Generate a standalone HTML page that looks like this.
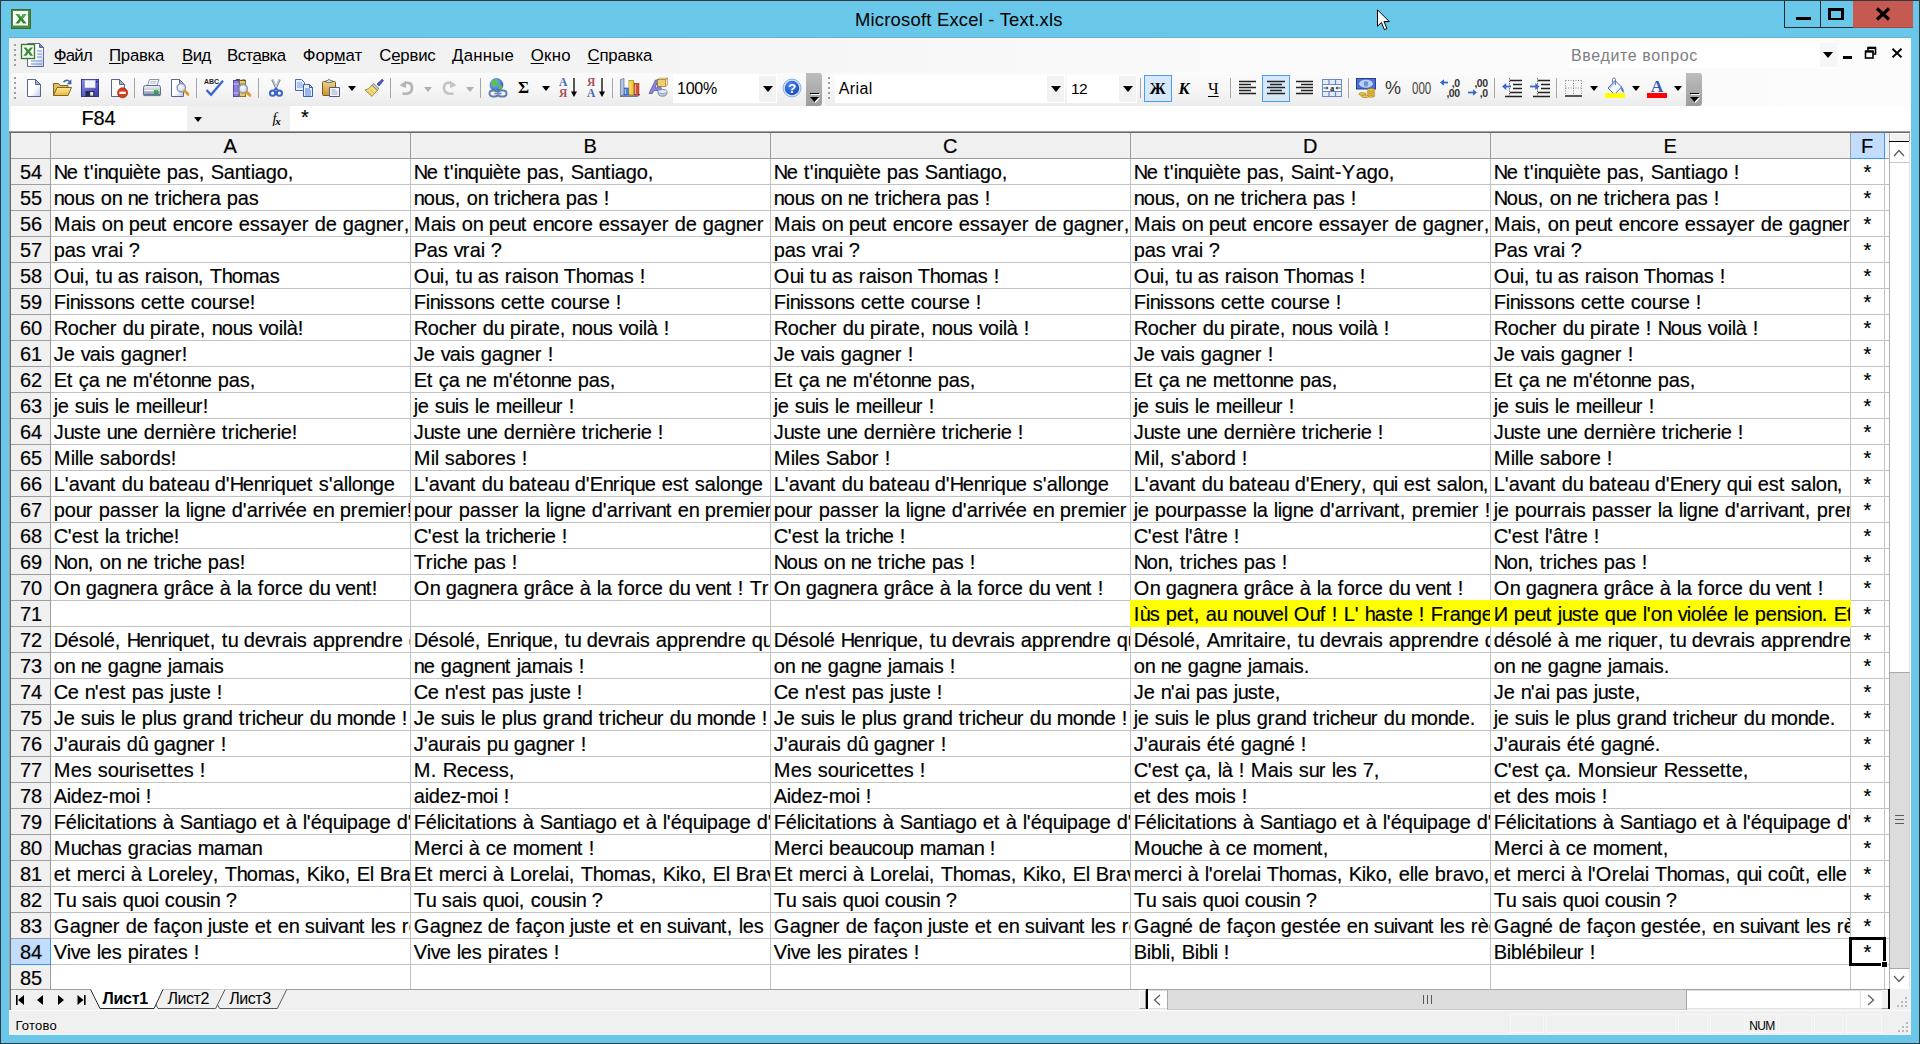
<!DOCTYPE html><html><head><meta charset="utf-8"><title>Microsoft Excel - Text.xls</title><style>
html,body{margin:0;padding:0}
body{width:1920px;height:1044px;overflow:hidden;background:#69c8ea;position:relative;font-family:"Liberation Sans","DejaVu Sans",sans-serif;color:#000}
div,span,svg,i,b{position:absolute;box-sizing:border-box;display:block}
.t{white-space:pre;font-style:normal;font-weight:normal}
#cl{left:9px;top:38px;width:1902px;height:997px;background:#f0f0f0}
#dock{left:9px;top:38px;width:1902px;height:68px;background:linear-gradient(90deg,#f0f0f0 0,#f1f1f1 20%,#f9f9f9 55%,#fcfcfc 100%)}
.band{top:73px;height:33px;background:linear-gradient(180deg,#fbfbfb 0,#f6f6f6 50%,#ebebeb 100%);border-radius:3px 0 0 3px}
.ov{top:73px;width:16px;height:33px;background:linear-gradient(180deg,#bdbdbd,#9c9c9c);border-radius:0 3px 3px 0}
.c{white-space:pre;overflow:hidden;font-size:20px;line-height:27px;height:25px;padding-left:2.7px}
.rh{left:11px;width:39px;height:25px;font-size:20px;line-height:27px;text-align:center;letter-spacing:-.15px;padding-left:1px}
.ch{top:133px;height:25px;font-size:20px;line-height:27px;text-align:center}
.hl{left:51px;width:1838px;height:1px;background:#c2c2c2}
.vl{top:159px;width:1px;height:830px;background:#c2c2c2}
.mi{height:26px;font-size:16.8px;line-height:26px;white-space:pre}
.mi u{text-decoration:underline;text-decoration-thickness:1px;text-underline-offset:1.500px}
.sep{top:78px;width:1px;height:20px;background:#a6a6a6}
.ic{top:78px;width:20px;height:20px;overflow:visible}
.dd{width:0;height:0;border-left:5.5px solid transparent;border-right:5.5px solid transparent;border-top:6px solid #000}
.dd.sm{border-left-width:4.500px;border-right-width:4.500px;border-top-width:5px}
.gd{width:2px;height:2px;background:#9e9e9e}
.ui{font-size:16px;line-height:26px;white-space:pre}
</style></head><body>

<svg width="0" height="0" style="position:absolute"><defs>
<linearGradient id="gp" x1="0" y1="0" x2="1" y2="1"><stop offset="0" stop-color="#fff"/><stop offset=".55" stop-color="#fff"/><stop offset="1" stop-color="#b9c6e6"/></linearGradient>
<linearGradient id="gf" x1="0" y1="0" x2="0" y2="1"><stop offset="0" stop-color="#fbe9a0"/><stop offset="1" stop-color="#eeb534"/></linearGradient>
<linearGradient id="gs" x1="0" y1="0" x2="1" y2="1"><stop offset="0" stop-color="#8a8ae8"/><stop offset="1" stop-color="#3c3ca8"/></linearGradient>
<linearGradient id="gpr" x1="0" y1="0" x2="0" y2="1"><stop offset="0" stop-color="#f4f6fa"/><stop offset="1" stop-color="#8a9ab8"/></linearGradient>
<radialGradient id="gl" cx=".4" cy=".35" r=".7"><stop offset="0" stop-color="#fff"/><stop offset="1" stop-color="#bcd0f0"/></radialGradient>
<radialGradient id="gh" cx=".4" cy=".3" r=".8"><stop offset="0" stop-color="#4a8af0"/><stop offset="1" stop-color="#1040b8"/></radialGradient>
<radialGradient id="gg" cx=".35" cy=".3" r=".8"><stop offset="0" stop-color="#8ac8ff"/><stop offset="1" stop-color="#2058c0"/></radialGradient>
<linearGradient id="gov" x1="0" y1="0" x2="0" y2="1"><stop offset="0" stop-color="#bcbcbc"/><stop offset="1" stop-color="#9c9c9c"/></linearGradient>
<linearGradient id="gcb" x1="0" y1="0" x2="0" y2="1"><stop offset="0" stop-color="#f0d488"/><stop offset="1" stop-color="#c89030"/></linearGradient>
</defs></svg>

<div style="left:0;top:0;width:1920px;height:1044px;border:1px solid #35383c"></div>
<div style="left:9px;top:37px;width:1902px;height:1px;background:#5fb4d3"></div>
<div id="cl"></div>
<div id="dock"></div>
<svg style="left:11px;top:9px" width="20" height="20" viewBox="0 0 20 20"><rect x=".5" y=".5" width="19" height="19" fill="#4c8a3c" stroke="#3a6e2e"/><rect x="2" y="2" width="15" height="14.500" fill="#fafcf8"/><path d="M4.500 5l3.500 0l2 3l2-3l3.500 0l-3.700 4.700l3.800 4.800l-3.600 0l-2-3.100l-2 3.100l-3.600 0l3.800-4.800z" fill="#2e8a2e"/><path d="M4.500 5l3.500 0l2 3l2-3l3.500 0l-3.700 4.700z" fill="#56a856"/></svg>
<div class="t" id="title" style="left:855.00px;top:7px;letter-spacing:0.220px;font-size:18.400px;line-height:26px">Microsoft Excel - Text.xls</div>
<div style="left:1784px;top:1px;width:37px;height:27px;border:1px solid #2b2b2b;border-top:0"></div>
<div style="left:1820px;top:1px;width:34px;height:27px;border:1px solid #2b2b2b;border-top:0"></div>
<div style="left:1853px;top:1px;width:60px;height:27px;background:#c65a50;border-bottom:1px solid #9c4a42"></div>
<div style="left:1796px;top:17px;width:15px;height:3px;background:#000"></div>
<div style="left:1828px;top:8px;width:16px;height:12px;border:3px solid #000;border-bottom-width:2.500px"></div>
<svg style="left:1875px;top:7px" width="16" height="14" viewBox="0 0 16 14"><path d="M2 1.500l12 11M14 1.500l-12 11" stroke="#000" stroke-width="3.200"/></svg>
<div class="gd" style="left:14px;top:44px"></div>
<div class="gd" style="left:14px;top:49px"></div>
<div class="gd" style="left:14px;top:54px"></div>
<div class="gd" style="left:14px;top:59px"></div>
<div class="gd" style="left:14px;top:64px"></div>
<svg style="left:20px;top:42px" width="26" height="26" viewBox="0 0 26 26"><path d="M7.500 1.500h12l4 4v19h-16z" fill="url(#gp)" stroke="#5a6c94"/><path d="M19.500 1.500v4h4z" fill="#7088c0" stroke="#5a6c94" stroke-linejoin="round"/><path d="M17 9h5M17 12h5M17 15h5M11 19h11M11 22h11" stroke="#6a8ad8" stroke-width="1"/><rect x="1.500" y="2.500" width="13" height="14" fill="#fbfdf9" stroke="#3d7a30" stroke-width="1.400"/><path d="M3.500 5.500h3l1.800 2.600l1.800-2.600h3l-3.200 4l3.300 4.200h-3.100l-1.800-2.700l-1.800 2.700h-3.100l3.300-4.200z" fill="#3a8a3a"/></svg>
<div class="mi" id="m1" style="left:53.70px;top:43px;letter-spacing:-0.733px"><u>Ф</u>айл</div>
<div class="mi" id="m2" style="left:109.00px;top:43px;letter-spacing:-0.260px"><u>П</u>равка</div>
<div class="mi" id="m3" style="left:182.00px;top:43px;letter-spacing:-0.500px"><u>В</u>ид</div>
<div class="mi" id="m4" style="left:227.00px;top:43px;letter-spacing:-0.550px">Вст<u>а</u>вка</div>
<div class="mi" id="m5" style="left:302.70px;top:43px;letter-spacing:-0.040px">Фор<u>м</u>ат</div>
<div class="mi" id="m6" style="left:379.30px;top:43px;letter-spacing:-0.220px">С<u>е</u>рвис</div>
<div class="mi" id="m7" style="left:452.00px;top:43px;letter-spacing:0.260px"><u>Д</u>анные</div>
<div class="mi" id="m8" style="left:530.70px;top:43px;letter-spacing:0.333px"><u>О</u>кно</div>
<div class="mi" id="m9" style="left:587.50px;top:43px;letter-spacing:-0.167px"><u>С</u>правка</div>
<div style="left:1569px;top:42px;width:268px;height:26px;background:#fff"></div>
<div style="left:1820px;top:43px;width:17px;height:24px;background:#f6f6f6"></div>
<div class="ui" id="q" style="left:1571.00px;top:42.5px;letter-spacing:0.631px;color:#7e7e7e">Введите вопрос</div>
<div class="dd" style="left:1823px;top:52px"></div>
<div style="left:1843px;top:56px;width:9px;height:3px;background:#000"></div>
<svg style="left:1864px;top:46px" width="13" height="14" viewBox="0 0 13 14"><path d="M4 4.500v-2.500h7.500v6h-2.500" fill="none" stroke="#000" stroke-width="1.600"/><path d="M3.500 1.800h8.500" stroke="#000" stroke-width="2.200"/><rect x="1.500" y="5.500" width="7.500" height="6.500" fill="none" stroke="#000" stroke-width="1.600"/><path d="M1 5.400h8.500" stroke="#000" stroke-width="2.200"/></svg>
<svg style="left:1891px;top:47px" width="12" height="12" viewBox="0 0 12 12"><path d="M1.500 1.800l9 8.600M10.500 1.800l-9 8.600" stroke="#000" stroke-width="2"/></svg>
<div class="band" style="left:11px;width:796px"></div>
<div class="ov" style="left:806px"></div>
<div class="band" style="left:825px;width:862px"></div>
<div class="ov" style="left:1686px"></div>
<div style="left:806px;top:93px;width:9px;height:1px;background:#000;margin-left:4px"></div>
<div style="left:806px;top:94px;width:9px;height:1px;background:#fff;margin-left:5px"></div>
<svg style="left:809px;top:96px" width="12" height="8" viewBox="0 0 12 8"><path d="M2 2h9l-4.500 5z" fill="#fff"/><path d="M1 1h9l-4.500 5z" fill="#000"/></svg>
<div style="left:1686px;top:93px;width:9px;height:1px;background:#000;margin-left:4px"></div>
<div style="left:1686px;top:94px;width:9px;height:1px;background:#fff;margin-left:5px"></div>
<svg style="left:1689px;top:96px" width="12" height="8" viewBox="0 0 12 8"><path d="M2 2h9l-4.500 5z" fill="#fff"/><path d="M1 1h9l-4.500 5z" fill="#000"/></svg>
<div class="gd" style="left:14px;top:77px"></div>
<div class="gd" style="left:14px;top:82px"></div>
<div class="gd" style="left:14px;top:87px"></div>
<div class="gd" style="left:14px;top:92px"></div>
<div class="gd" style="left:14px;top:97px"></div>
<div class="gd" style="left:828px;top:77px"></div>
<div class="gd" style="left:828px;top:82px"></div>
<div class="gd" style="left:828px;top:87px"></div>
<div class="gd" style="left:828px;top:92px"></div>
<div class="gd" style="left:828px;top:97px"></div>
<svg class="ic" style="left:24px;top:78px" width="20" height="20" viewBox="0 0 20 20"><path d="M3.5 1.5h8l5 5v12h-13z" fill="url(#gp)" stroke="#55678c"/><path d="M11.5 1.5v5h5z" fill="#9fb0d6" stroke="#55678c" stroke-linejoin="round"/></svg>
<svg class="ic" style="left:52px;top:78px" width="20" height="20" viewBox="0 0 20 20"><path d="M1.5 5.5h5l1.5 2h8v10h-14.5z" fill="#e4be5c" stroke="#7d6428"/><path d="M1.5 17.5l3.5-8h14.5l-3.5 8z" fill="url(#gf)" stroke="#7d6428" stroke-linejoin="round"/><path d="M11.5 4.2q3.5-3.6 6.3-.4" fill="none" stroke="#3d62a8" stroke-width="1.5"/><path d="M19.4 1.2v5h-4.6z" fill="#3d62a8"/></svg>
<svg class="ic" style="left:80px;top:78px" width="20" height="20" viewBox="0 0 20 20"><rect x="1.5" y="1.5" width="17" height="17" fill="url(#gs)" stroke="#34349a"/><rect x="4.5" y="2" width="11" height="8" fill="#f4f6ff" stroke="#7a7ad0" stroke-width=".6"/><rect x="5.5" y="13" width="9" height="5.5" fill="#2a2a48"/><rect x="10.2" y="14" width="3" height="3.6" fill="#e8ecf8"/><rect x="16" y="3" width="1.4" height="1.4" fill="#22226a"/></svg>
<svg class="ic" style="left:108px;top:78px" width="20" height="20" viewBox="0 0 20 20"><path d="M3.5 1.5h8l5 5v12h-13z" fill="url(#gp)" stroke="#55678c"/><path d="M11.5 1.5v5h5z" fill="#9fb0d6" stroke="#55678c" stroke-linejoin="round"/><circle cx="14.6" cy="14.8" r="5" fill="#d8401c" stroke="#a02a10" stroke-width=".8"/><rect x="11.4" y="13.7" width="6.4" height="2.3" fill="#fff"/></svg>
<svg class="ic" style="left:142px;top:78px" width="20" height="20" viewBox="0 0 20 20"><path d="M5.5 7.5l2-6h9.5l-2 6z" fill="#f8f9fc" stroke="#8a96ac"/><path d="M8.5 3.6h6M8 5.3h6" stroke="#a8b2c8" stroke-width=".8"/><path d="M1.5 9.5q0-2 2-2h13q2 0 2 2v7h-17z" fill="url(#gpr)" stroke="#5c6c8c"/><path d="M2.5 12.5h15" stroke="#fff" stroke-width="1"/><path d="M1.5 16.5h17v1.6h-17z" fill="#6c7c9c"/><rect x="12.6" y="12.6" width="3.4" height="3" fill="#20c030" stroke="#108018" stroke-width=".5"/></svg>
<svg class="ic" style="left:170px;top:78px" width="20" height="20" viewBox="0 0 20 20"><path d="M1.5 1.5h8l4 4v13h-12z" fill="url(#gp)" stroke="#55678c"/><path d="M9.5 1.5v4h4z" fill="#9fb0d6" stroke="#55678c" stroke-linejoin="round"/><circle cx="11.3" cy="9.8" r="4.2" fill="url(#gl)" stroke="#8c98b0" stroke-width="1.4"/><path d="M14.5 13.0l3.6 3.6" stroke="#e89a28" stroke-width="2.6" stroke-linecap="round"/><path d="M14.5 13.0l3.6 3.6" stroke="#7a5a20" stroke-width=".5" fill="none" transform="translate(.9,-.9)"/></svg>
<svg class="ic" style="left:204px;top:78px" width="20" height="20" viewBox="0 0 20 20"><text x="0" y="5.8" font-family="Liberation Sans,sans-serif" font-size="7.6" font-weight="bold" fill="#222" textLength="15" lengthAdjust="spacingAndGlyphs">ABC</text><path d="M2.5 12l4.5 4.800l12-14" fill="none" stroke="#3a66d0" stroke-width="2.300" stroke-linejoin="miter"/></svg>
<svg class="ic" style="left:232px;top:78px" width="20" height="20" viewBox="0 0 20 20"><rect x="1.5" y="2.5" width="5.5" height="16" fill="#8a80e0" stroke="#5048a8"/><path d="M1.5 6h5.5M1.5 15h5.5" stroke="#c8c0ff" stroke-width="1"/><rect x="7.5" y="2.5" width="6" height="16" fill="#e8c860" stroke="#8a7028"/><path d="M7.5 6h6" stroke="#8a7028" stroke-width=".8"/><path d="M3 2.5l1.5-1.5h3l1.5 1.5M9 2.5l1-1h3l1 1" fill="#444" stroke="none"/><circle cx="11.2" cy="10.8" r="4.2" fill="url(#gl)" stroke="#8c98b0" stroke-width="1.4"/><path d="M14.399999999999999 14.0l3.6 3.6" stroke="#e89a28" stroke-width="2.6" stroke-linecap="round"/><path d="M14.399999999999999 14.0l3.6 3.6" stroke="#7a5a20" stroke-width=".5" fill="none" transform="translate(.9,-.9)"/></svg>
<svg class="ic" style="left:266px;top:78px" width="20" height="20" viewBox="0 0 20 20"><path d="M6.2 1.5l4.6 10M13.8 1.5l-4.6 10" stroke="#8a94a8" stroke-width="2.2" fill="none"/><path d="M6.8 1.5l3.6 8M13.2 1.5l-3.6 8" stroke="#e4e8f0" stroke-width=".7" fill="none"/><circle cx="6.6" cy="15.2" r="2.6" fill="none" stroke="#3a62c8" stroke-width="2"/><circle cx="13.4" cy="15.2" r="2.6" fill="none" stroke="#3a62c8" stroke-width="2"/><path d="M8 12.8l2-2.4l2 2.4" stroke="#3a62c8" stroke-width="1.8" fill="none"/></svg>
<svg class="ic" style="left:294px;top:78px" width="20" height="20" viewBox="0 0 20 20"><path d="M1.5 1.5h6l3 3v8h-9z" fill="#e8f0ff" stroke="#4a68b0"/><path d="M3 5h5M3 7h6M3 9h6" stroke="#6a90e0" stroke-width=".9"/><path d="M9.5 6.5h6l3 3v9h-9z" fill="#e8f0ff" stroke="#4060a8"/><path d="M15.5 6.5v3h3z" fill="#a8c0f0" stroke="#4060a8" stroke-linejoin="round"/><path d="M11 11h5M11 13h6M11 15h6M11 17h6" stroke="#4a78e0" stroke-width="1"/></svg>
<svg class="ic" style="left:321px;top:78px" width="20" height="20" viewBox="0 0 20 20"><rect x="1.5" y="3.5" width="13" height="14" rx="1" fill="url(#gcb)" stroke="#7a5a1c"/><path d="M5 4.5v-2h2l.6-1.3h1l.6 1.300h2v2z" fill="#d8dce8" stroke="#5a5a6a" stroke-width=".7"/><path d="M8.500 9.500h10v9h-10z" fill="#f4f6fc" stroke="#4a5a80"/><path d="M10.500 12h4M10.500 14h6M10.500 16h6" stroke="#8a9ac0" stroke-width=".9"/></svg>
<svg class="ic" style="left:364px;top:78px" width="20" height="20" viewBox="0 0 20 20"><path d="M13 6l5.200-4.800l1.300 1.300l-4.500 5.500z" fill="#5a5ad0" stroke="#2a2a88" stroke-width=".7"/><path d="M9.500 5.500l5.500 5l-1.800 1.800l-5.700-4.800z" fill="#c8c8d0" stroke="#66666e" stroke-width=".7"/><path d="M7.800 7.200l5.600 5.200l-5.400 6l-7-6.400q4.500-.6 6.800-4.800z" fill="#f4dc80" stroke="#8a7428" stroke-width=".8"/><path d="M4 13.500l4 3.800M6 11.500l4 3.800" stroke="#c8a840" stroke-width=".7"/></svg>
<svg class="ic" style="left:397px;top:78px" width="20" height="20" viewBox="0 0 20 20"><path d="M5.500 15.500q10 1.500 9.500-6.500q-.8-5.500-7-4" fill="none" stroke="#b4b4b4" stroke-width="2.600"/><path d="M2.500 7.500l6.500-5v7.500z" fill="#b4b4b4"/></svg>
<svg class="ic" style="left:439px;top:78px" width="20" height="20" viewBox="0 0 20 20"><path d="M14.500 15.500q-10 1.500-9.500-6.500q.8-5.500 7-4" fill="none" stroke="#c4c4c4" stroke-width="2.600"/><path d="M17.500 7.500l-6.500-5v7.500z" fill="#c4c4c4"/></svg>
<svg class="ic" style="left:488px;top:78px" width="20" height="20" viewBox="0 0 20 20"><circle cx="8.500" cy="7" r="6.500" fill="url(#gg)" stroke="#3a5a98" stroke-width=".6"/><path d="M4.500 2.500q3-1.500 4.500.5q2 1.500 0 3.500q-.5 2.500-3 2q-3-.5-2.500-3.500zM10.500 7q2.500-.8 3.500 1q.5 2-1.500 3.500q-2 .5-2.500-2z" fill="#5cc04c"/><rect x="1.500" y="12.500" width="8.500" height="6" rx="3" fill="none" stroke="#5f7cac" stroke-width="1.900"/><rect x="10" y="12.500" width="8.500" height="6" rx="3" fill="none" stroke="#5f7cac" stroke-width="1.900"/><path d="M6.500 15.500h7" stroke="#9fb4d8" stroke-width="2.200"/><path d="M6.500 15.500h7" stroke="#4a6494" stroke-width=".6"/></svg>
<svg class="ic" style="left:620px;top:78px" width="20" height="20" viewBox="0 0 20 20"><path d="M.500 1.500l3.500-1v16l-3.500 2z" fill="#b4c4e0" stroke="#5a6e98" stroke-width=".7"/><path d="M.500 18.500l3.500-2h16l-2.500 2z" fill="#8c9cc0" stroke="#4a5a88" stroke-width=".7"/><rect x="4.300" y="10" width="4" height="7" fill="#4a80e8" stroke="#2a4aa0" stroke-width=".6"/><rect x="9" y="2.500" width="4.600" height="14.500" fill="#f4cc28" stroke="#907010" stroke-width=".6"/><rect x="14.300" y="5.500" width="4.600" height="11.500" fill="#e44c30" stroke="#902010" stroke-width=".6"/><path d="M10 3.500v12.500M15.300 6.500v9.500M5.300 11v5" stroke="#fff" stroke-opacity=".55" stroke-width="1.200"/></svg>
<svg class="ic" style="left:648px;top:78px" width="20" height="20" viewBox="0 0 20 20"><path d="M1 15.500l6.500-13.500h3.500l3.500 13.500h-3.600l-.7-3h-4.400l-1.300 3zM7 9.800h2.800l-.9-4.600z" fill="#8a86dc" stroke="#4a48a0" stroke-width=".7" fill-rule="evenodd"/><rect x="9.500" y="1.500" width="8" height="7" fill="#f0d070" stroke="#907020" stroke-width=".7"/><path d="M9.500 1.500l2-1.300h8l-2 1.300zM17.500 1.500l2-1.300v7l-2 1.300z" fill="#f8e8a8" stroke="#907020" stroke-width=".5"/><ellipse cx="14.500" cy="14.800" rx="4.500" ry="3.400" fill="#c4cce0" stroke="#6a7898" stroke-width=".8"/><ellipse cx="14.500" cy="13.600" rx="4.500" ry="2" fill="#e8ecf6" stroke="#6a7898" stroke-width=".6"/></svg>
<svg class="ic" style="left:782px;top:78px" width="20" height="20" viewBox="0 0 20 20"><circle cx="10" cy="10" r="9" fill="#cfe0f6" stroke="#8cb0dc" stroke-width="1"/><circle cx="10" cy="10" r="7.200" fill="url(#gh)"/><text x="10" y="15" text-anchor="middle" font-family="Liberation Sans,sans-serif" font-weight="bold" font-size="13.500" fill="#fff">?</text></svg>
<div class="sep" style="left:134px"></div>
<div class="sep" style="left:196px"></div>
<div class="sep" style="left:258px"></div>
<div class="sep" style="left:390px"></div>
<div class="sep" style="left:480px"></div>
<div class="sep" style="left:612px"></div>
<div class="dd sm" style="left:348px;top:86px"></div>
<div class="dd sm" style="left:424px;top:87px;border-top-color:#b0b0b0"></div>
<div class="dd sm" style="left:466px;top:87px;border-top-color:#b0b0b0"></div>
<div class="dd sm" style="left:542px;top:86px"></div>
<div class="t" id="sigma" style="left:518.00px;top:74px;font-family:'Liberation Serif',serif;font-weight:bold;font-size:17px;line-height:28px">Σ</div>
<div class="t" style="left:559px;top:76px;font-family:'Liberation Serif',serif;font-weight:bold;font-size:11.500px;line-height:12px;color:#4866b0">А</div>
<div class="t" style="left:559px;top:87px;font-family:'Liberation Serif',serif;font-weight:bold;font-size:11.500px;line-height:12px;color:#a85454">Я</div>
<div class="t" style="left:587px;top:76px;font-family:'Liberation Serif',serif;font-weight:bold;font-size:11.500px;line-height:12px;color:#a85454">Я</div>
<div class="t" style="left:587px;top:87px;font-family:'Liberation Serif',serif;font-weight:bold;font-size:11.500px;line-height:12px;color:#4866b0">А</div>
<svg style="left:569.5px;top:78px" width="8" height="20" viewBox="0 0 8 20"><path d="M4 0v16" stroke="#000" stroke-width="1.300"/><path d="M1 13.500l3 5.500l3-5.500z" fill="#000"/></svg>
<svg style="left:597.5px;top:78px" width="8" height="20" viewBox="0 0 8 20"><path d="M4 0v16" stroke="#000" stroke-width="1.300"/><path d="M1 13.500l3 5.500l3-5.500z" fill="#000"/></svg>
<div style="left:673px;top:75px;width:104px;height:28px;background:#fff"></div>
<div style="left:759px;top:76px;width:17px;height:26px;background:#f2f2f2"></div>
<div class="ui" id="zoom" style="left:677.00px;top:75px;letter-spacing:-0.267px;line-height:27px">100%</div>
<div class="dd" style="left:763px;top:86px"></div>
<div style="left:835px;top:75px;width:230px;height:28px;background:#fff"></div>
<div style="left:1047px;top:76px;width:17px;height:26px;background:#f2f2f2"></div>
<div class="ui" id="fname" style="left:838.80px;top:75px;letter-spacing:0.350px;line-height:27px">Arial</div>
<div class="dd" style="left:1051px;top:86px"></div>
<div style="left:1067px;top:75px;width:70px;height:28px;background:#fff"></div>
<div style="left:1119px;top:76px;width:17px;height:26px;background:#f2f2f2"></div>
<div class="ui" id="fsize" style="left:1071.10px;top:75px;letter-spacing:-0.600px;line-height:27px;font-size:15.500px">12</div>
<div class="dd" style="left:1123px;top:86px"></div>
<div class="sep" style="left:1140px"></div>
<div class="sep" style="left:1230px"></div>
<div class="sep" style="left:1348px"></div>
<div class="sep" style="left:1494px"></div>
<div class="sep" style="left:1556px"></div>
<div style="left:1144px;top:75px;width:28px;height:27px;background:#d6e8fa;border:1px solid #4a9cf0"></div>
<div style="left:1262px;top:75px;width:28px;height:27px;background:#d6e8fa;border:1px solid #4a9cf0"></div>
<div class="t" id="bB" style="left:1149.50px;top:75px;font-family:'Liberation Serif',serif;font-weight:bold;font-size:16.500px;line-height:27px">Ж</div>
<div class="t" id="bI" style="left:1178.50px;top:75px;font-family:'Liberation Serif',serif;font-weight:bold;font-size:16.500px;line-height:27px;font-style:italic">К</div>
<div class="t" id="bU" style="left:1208.00px;top:75px;font-family:'Liberation Serif',serif;font-weight:bold;font-size:16.500px;line-height:27px;font-weight:normal;text-decoration:underline;text-underline-offset:2px">Ч</div>
<svg class="ic" style="left:1238px;top:78px" width="20" height="20" viewBox="0 0 20 20"><path d="M1 3.500h17M1 6.500h12M1 9.500h17M1 12.500h12M1 15.500h17" stroke="#222" stroke-width="1.400"/></svg>
<svg class="ic" style="left:1266px;top:78px" width="20" height="20" viewBox="0 0 20 20"><path d="M1 3.500h18M4 6.500h12M1 9.500h18M4 12.500h12M1 15.500h18" stroke="#222" stroke-width="1.400"/></svg>
<svg class="ic" style="left:1294px;top:78px" width="20" height="20" viewBox="0 0 20 20"><path d="M2 3.500h17M7 6.500h12M2 9.500h17M7 12.500h12M2 15.500h17" stroke="#222" stroke-width="1.400"/></svg>
<svg class="ic" style="left:1322px;top:78px" width="20" height="20" viewBox="0 0 20 20"><rect x=".5" y="1.500" width="19" height="17" fill="#e4ecfa" stroke="#6a88c8"/><path d="M.5 6.500h19M.5 13.500h19M7 1.500v5M13.500 1.500v5M7 13.500v5M13.500 13.500v5" stroke="#6a88c8" stroke-width="1.200"/><rect x="1" y="7" width="18" height="6" fill="#f6f8fe"/><text x="10" y="12.600" text-anchor="middle" font-family="Liberation Serif,serif" font-weight="bold" font-size="8.500" fill="#222">a</text><path d="M1.500 10h4.500M18.500 10h-4.500" stroke="#444" stroke-width="1.200"/><path d="M6.500 10l-2-1.800v3.600zM13.500 10l2-1.800v3.600z" fill="#444"/></svg>
<svg class="ic" style="left:1356px;top:78px" width="20" height="20" viewBox="0 0 20 20"><rect x=".5" y=".5" width="19" height="10.500" fill="#4a70d8" stroke="#2a3e90"/><ellipse cx="10" cy="5.700" rx="6.500" ry="3.600" fill="#b8d0f8" stroke="#e8f0ff" stroke-width=".6"/><ellipse cx="10" cy="5.700" rx="2.200" ry="2.800" fill="#6a90e0"/><g fill="#f0c040" stroke="#8a6a18" stroke-width=".5"><ellipse cx="15" cy="17.800" rx="3.800" ry="1.500"/><ellipse cx="15" cy="15.800" rx="3.800" ry="1.500"/><ellipse cx="15" cy="13.800" rx="3.800" ry="1.500"/><ellipse cx="15" cy="11.800" rx="3.800" ry="1.500"/><ellipse cx="6.500" cy="16" rx="3.600" ry="1.500"/><ellipse cx="9" cy="18.300" rx="3.600" ry="1.400"/></g></svg>
<svg class="ic" style="left:1440px;top:78px" width="20" height="20" viewBox="0 0 20 20"><text x="19.500" y="8.600" text-anchor="end" font-family="Liberation Sans,sans-serif" font-size="10.500" font-weight="bold" fill="#333" letter-spacing="-.5">,0</text><text x="19.500" y="18.600" text-anchor="end" font-family="Liberation Sans,sans-serif" font-size="10.500" font-weight="bold" fill="#333" letter-spacing="-.5">,00</text><path d="M1 4.500h7" stroke="#3a66d0" stroke-width="1.800"/><path d="M0 4.500l4-3.300v6.600z" fill="#3a66d0"/></svg>
<svg class="ic" style="left:1468px;top:78px" width="20" height="20" viewBox="0 0 20 20"><text x="19.500" y="8.600" text-anchor="end" font-family="Liberation Sans,sans-serif" font-size="10.500" font-weight="bold" fill="#333" letter-spacing="-.5">,00</text><text x="19.500" y="18.600" text-anchor="end" font-family="Liberation Sans,sans-serif" font-size="10.500" font-weight="bold" fill="#333" letter-spacing="-.5">,0</text><path d="M0 14.500h7" stroke="#3a66d0" stroke-width="1.800"/><path d="M9 14.500l-4-3.300v6.600z" fill="#3a66d0"/></svg>
<svg class="ic" style="left:1502px;top:78px" width="20" height="20" viewBox="0 0 20 20"><path d="M8 2.500h12M11 6.500h9M11 10.500h9M8 14.500h12M3 18.500h17" stroke="#222" stroke-width="1.600"/><path d="M7.500 0v20" stroke="#444" stroke-width=".8" stroke-dasharray="1.500 1"/><path d="M2 8.500h7" stroke="#3a66d0" stroke-width="1.800"/><path d="M0 8.500l4.200-3.400v6.800z" fill="#3a66d0"/></svg>
<svg class="ic" style="left:1530px;top:78px" width="20" height="20" viewBox="0 0 20 20"><path d="M8 2.500h12M11 6.500h9M11 10.500h9M8 14.500h12M3 18.500h17" stroke="#222" stroke-width="1.600"/><path d="M7.500 0v20" stroke="#444" stroke-width=".8" stroke-dasharray="1.500 1"/><path d="M0 8.500h6" stroke="#3a66d0" stroke-width="1.800"/><path d="M9.500 8.500l-4.200-3.400v6.800z" fill="#3a66d0"/></svg>
<svg class="ic" style="left:1564px;top:78px" width="20" height="20" viewBox="0 0 20 20"><path d="M1.500 2.500h16M1.500 2.500v15M17.500 2.500v15M9.500 2.500v15M1.500 10h16" stroke="#8a8a8a" stroke-width="1" stroke-dasharray="1 1.500" fill="none"/><path d="M1 18h17" stroke="#444" stroke-width="1.800"/></svg>
<svg class="ic" style="left:1605px;top:78px" width="20" height="20" viewBox="0 0 20 20"><path d="M3 10l7-7.500l6.500 6.500l-7 7.500z" fill="#f4f8ff" stroke="#4a6ab0" stroke-width="1"/><path d="M7.500 5v-3.500q0-1.500 1.500-1.500t1.500 1.500v5.500" fill="none" stroke="#6a7aa0" stroke-width="1"/><path d="M16 8.500q3.500 2.500 2.500 6.500q-2.500-2-2.500-6.500z" fill="#3a6ad8"/><path d="M4.500 10l5.500-5.800" stroke="#a8c0f0" stroke-width="1.500"/></svg>
<svg class="ic" style="left:1647px;top:78px" width="20" height="20" viewBox="0 0 20 20"><text x="10" y="13.800" text-anchor="middle" font-family="Liberation Serif,serif" font-weight="bold" font-size="17.500" fill="#3a5cb0">A</text></svg>
<div class="ui" id="pct" style="left:1385.00px;top:75px;font-size:18px;line-height:27px;color:#333">%</div>
<div class="ui" id="thou" style="left:1412.00px;top:75px;font-size:17px;line-height:27px;color:#444;transform:scaleX(.68);transform-origin:0 0">000</div>
<div class="dd sm" style="left:1590px;top:86px"></div>
<div class="dd sm" style="left:1632px;top:86px"></div>
<div class="dd sm" style="left:1674px;top:86px"></div>
<div style="left:1605px;top:93px;width:20px;height:5px;background:#ffff00"></div>
<div style="left:1647px;top:93px;width:20px;height:5px;background:#ff0000"></div>
<div style="left:11px;top:106px;width:176px;height:25px;background:#fff"></div>
<div class="dd sm" style="left:194px;top:117px"></div>
<div class="t" style="left:272.500px;top:108px;font-family:'Liberation Serif',serif;font-style:italic;font-size:14.500px;line-height:20px;letter-spacing:-1.200px">f<span style="position:static;display:inline;font-size:11px;font-weight:bold;vertical-align:-1.500px">x</span></div>
<div style="left:290px;top:106px;width:1621px;height:25px;background:#fff"></div>
<div style="left:9px;top:131px;width:1901px;height:1px;background:#a0a0a0"></div>
<div style="left:9px;top:132px;width:1901px;height:1px;background:#696969"></div>
<div style="left:10px;top:133px;width:1px;height:877px;background:#696969"></div>
<div style="left:9px;top:133px;width:1px;height:877px;background:#a0a0a0"></div>
<div style="left:11px;top:133px;width:1900px;height:856px;background:#fff"></div>
<div style="left:11px;top:133px;width:1879px;height:25px;background:#f0f0f0"></div>
<div style="left:11px;top:158px;width:1879px;height:1px;background:#9c9c9c"></div>
<div style="left:50px;top:133px;width:1px;height:856px;background:#9c9c9c"></div>
<div style="left:11px;top:159px;width:39px;height:830px;background:#f0f0f0"></div>
<div style="left:410px;top:133px;width:1px;height:25px;background:#9c9c9c"></div>
<div style="left:770px;top:133px;width:1px;height:25px;background:#9c9c9c"></div>
<div style="left:1130px;top:133px;width:1px;height:25px;background:#9c9c9c"></div>
<div style="left:1490px;top:133px;width:1px;height:25px;background:#9c9c9c"></div>
<div style="left:1850px;top:133px;width:1px;height:25px;background:#9c9c9c"></div>
<div style="left:1851px;top:133px;width:34px;height:26px;background:#c2dcfb;border-right:1px solid #3b97f5;border-bottom:1px solid #3b97f5"></div>
<div class="vl" style="left:410px"></div>
<div class="vl" style="left:770px"></div>
<div class="vl" style="left:1130px"></div>
<div class="vl" style="left:1490px"></div>
<div class="vl" style="left:1850px"></div>
<div class="vl" style="left:1884px"></div>
<div class="hl" style="top:184px"></div>
<div style="left:11px;top:184px;width:39px;height:1px;background:#9c9c9c"></div>
<div class="hl" style="top:210px"></div>
<div style="left:11px;top:210px;width:39px;height:1px;background:#9c9c9c"></div>
<div class="hl" style="top:236px"></div>
<div style="left:11px;top:236px;width:39px;height:1px;background:#9c9c9c"></div>
<div class="hl" style="top:262px"></div>
<div style="left:11px;top:262px;width:39px;height:1px;background:#9c9c9c"></div>
<div class="hl" style="top:288px"></div>
<div style="left:11px;top:288px;width:39px;height:1px;background:#9c9c9c"></div>
<div class="hl" style="top:314px"></div>
<div style="left:11px;top:314px;width:39px;height:1px;background:#9c9c9c"></div>
<div class="hl" style="top:340px"></div>
<div style="left:11px;top:340px;width:39px;height:1px;background:#9c9c9c"></div>
<div class="hl" style="top:366px"></div>
<div style="left:11px;top:366px;width:39px;height:1px;background:#9c9c9c"></div>
<div class="hl" style="top:392px"></div>
<div style="left:11px;top:392px;width:39px;height:1px;background:#9c9c9c"></div>
<div class="hl" style="top:418px"></div>
<div style="left:11px;top:418px;width:39px;height:1px;background:#9c9c9c"></div>
<div class="hl" style="top:444px"></div>
<div style="left:11px;top:444px;width:39px;height:1px;background:#9c9c9c"></div>
<div class="hl" style="top:470px"></div>
<div style="left:11px;top:470px;width:39px;height:1px;background:#9c9c9c"></div>
<div class="hl" style="top:496px"></div>
<div style="left:11px;top:496px;width:39px;height:1px;background:#9c9c9c"></div>
<div class="hl" style="top:522px"></div>
<div style="left:11px;top:522px;width:39px;height:1px;background:#9c9c9c"></div>
<div class="hl" style="top:548px"></div>
<div style="left:11px;top:548px;width:39px;height:1px;background:#9c9c9c"></div>
<div class="hl" style="top:574px"></div>
<div style="left:11px;top:574px;width:39px;height:1px;background:#9c9c9c"></div>
<div class="hl" style="top:600px"></div>
<div style="left:11px;top:600px;width:39px;height:1px;background:#9c9c9c"></div>
<div class="hl" style="top:626px"></div>
<div style="left:11px;top:626px;width:39px;height:1px;background:#9c9c9c"></div>
<div class="hl" style="top:652px"></div>
<div style="left:11px;top:652px;width:39px;height:1px;background:#9c9c9c"></div>
<div class="hl" style="top:678px"></div>
<div style="left:11px;top:678px;width:39px;height:1px;background:#9c9c9c"></div>
<div class="hl" style="top:704px"></div>
<div style="left:11px;top:704px;width:39px;height:1px;background:#9c9c9c"></div>
<div class="hl" style="top:730px"></div>
<div style="left:11px;top:730px;width:39px;height:1px;background:#9c9c9c"></div>
<div class="hl" style="top:756px"></div>
<div style="left:11px;top:756px;width:39px;height:1px;background:#9c9c9c"></div>
<div class="hl" style="top:782px"></div>
<div style="left:11px;top:782px;width:39px;height:1px;background:#9c9c9c"></div>
<div class="hl" style="top:808px"></div>
<div style="left:11px;top:808px;width:39px;height:1px;background:#9c9c9c"></div>
<div class="hl" style="top:834px"></div>
<div style="left:11px;top:834px;width:39px;height:1px;background:#9c9c9c"></div>
<div class="hl" style="top:860px"></div>
<div style="left:11px;top:860px;width:39px;height:1px;background:#9c9c9c"></div>
<div class="hl" style="top:886px"></div>
<div style="left:11px;top:886px;width:39px;height:1px;background:#9c9c9c"></div>
<div class="hl" style="top:912px"></div>
<div style="left:11px;top:912px;width:39px;height:1px;background:#9c9c9c"></div>
<div class="hl" style="top:938px"></div>
<div style="left:11px;top:938px;width:39px;height:1px;background:#9c9c9c"></div>
<div style="left:11px;top:939px;width:40px;height:26px;background:#c2dcfb;border-right:1px solid #3b97f5;border-bottom:1px solid #3b97f5"></div>
<div class="hl" style="top:964px"></div>
<div style="left:1130px;top:600px;width:721px;height:27px;background:#ffff00"></div>
<svg style="left:0;top:0" width="1920" height="1044" viewBox="0 0 1920 1044" font-family="Liberation Sans,sans-serif" font-size="20" fill="#000" stroke="#000" stroke-width=".18"><g transform="scale(1,1.05)">
<svg x="51" y="151.43" width="359" height="790.48"><g transform="translate(2.700,0)">
<text y="19.05" x="0 13 24 30 36 40 44 54 65 75 79 90 96 107 113 124 135 145 151 157 170 181 191 197 201 212 223 234">Ne t'inquiète pas, Santiago,</text>
<text y="43.81" x="0 10 21 31 41 47 58 68 74 84 95 101 107 114 118 128 138 149 156 167 173 184 195">nous on ne trichera pas</text>
<text y="68.57" x="0 17 28 32 42 48 59 69 75 86 97 107 113 119 130 140 150 161 168 179 185 196 206 216 227 237 248 255 261 272 283 289 300 311 322 332 343 350">Mais on peut encore essayer de gagner,</text>
<text y="93.33" x="0 11 22 32 38 47 54 65 69 75">pas vrai ?</text>
<text y="118.1" x="0 16 26 30 36 42 48 58 64 75 85 91 98 109 113 123 134 144 150 156 168 178 189 205 216">Oui, tu as raison, Thomas</text>
<text y="142.86" x="0 12 16 26 30 40 50 61 71 81 87 97 108 114 120 131 137 147 158 168 175 185 196">Finissons cette course!</text>
<text y="167.62" x="0 14 25 35 45 56 63 69 80 90 96 107 111 118 129 135 146 152 158 168 179 189 199 205 214 225 229 233 244">Rocher du pirate, nous voilà!</text>
<text y="192.38" x="0 10 21 27 36 47 51 61 67 78 89 100 110 121 128">Je vais gagner!</text>
<text y="217.14" x="0 13 19 25 35 46 52 62 73 79 95 99 110 116 127 137 147 158 164 175 186 196">Et ça ne m'étonne pas,</text>
<text y="241.9" x="0 4 15 21 31 41 45 55 61 65 76 82 98 109 113 117 121 132 142 149">je suis le meilleur!</text>
<text y="266.67" x="0 10 20 30 36 47 53 63 73 84 90 101 112 119 129 133 144 151 162 168 174 181 185 195 205 216 223 227 238">Juste une dernière tricherie!</text>
<text y="291.43" x="0 17 21 25 29 40 46 56 67 78 89 96 107 117">Mille sabords!</text>
<text y="316.19" x="0 11 15 26 35 46 56 62 68 79 89 95 106 117 123 134 145 155 161 172 176 189 200 210 217 221 232 242 253 259 265 275 279 290 294 298 309 319 330">L'avant du bateau d'Henriquet s'allonge</text>
<text y="340.95" x="0 11 22 32 39 45 56 67 77 87 98 105 111 115 126 132 136 140 151 161 172 178 189 193 204 211 218 222 231 242 253 259 270 280 286 297 304 315 331 335 346 353">pour passer la ligne d'arrivée en premier!</text>
<text y="365.71" x="0 14 18 29 39 45 51 55 66 72 78 85 89 99 109 120">C'est la triche!</text>
<text y="390.48" x="0 13 24 34 40 46 57 67 73 83 94 100 106 113 117 127 137 148 154 165 176 186">Non, on ne triche pas!</text>
<text y="415.24" x="0 16 26 32 43 54 65 75 86 93 104 110 121 128 139 149 160 166 177 183 187 198 204 210 221 228 238 249 255 266 276 282 291 302 312 318">On gagnera grâce à la force du vent!</text>
<text y="464.76" x="0 14 25 35 46 50 61 67 73 86 97 107 114 118 129 139 150 156 162 168 174 184 190 201 212 221 228 239 243 253 259 270 281 292 299 310 320 331 338 349 355 366">Désolé, Henriquet, tu devrais apprendre qu</text>
<text y="489.52" x="0 11 21 27 37 48 54 65 76 87 97 108 114 118 129 145 156 160">on ne gagne jamais</text>
<text y="514.29" x="0 14 25 31 41 45 56 66 72 78 89 100 110 116 120 130 140 146 157 163">Ce n'est pas juste !</text>
<text y="539.05" x="0 10 21 27 37 47 51 61 67 71 82 88 99 103 113 123 129 140 147 158 168 179 185 191 198 202 212 222 233 243 250 256 267 277 283 299 310 320 331 342 348">Je suis le plus grand tricheur du monde !</text>
<text y="563.81" x="0 10 14 25 35 42 53 57 67 73 84 94 100 111 122 133 143 154 161 167">J'aurais dû gagner !</text>
<text y="588.57" x="0 17 28 38 44 54 65 75 82 86 96 107 113 119 130 140 146">Mes sourisettes !</text>
<text y="613.33" x="0 13 17 28 39 48 55 71 82 86 92">Aidez-moi !</text>
<text y="638.1" x="0 12 23 27 31 41 45 51 62 68 72 83 93 103 109 120 126 139 150 160 166 170 181 192 203 209 220 226 232 243 249 253 257 268 279 289 293 304 315 326 337 343 354 358 371">Félicitations à Santiago et à l'équipage d'El</text>
<text y="662.86" x="0 17 27 37 47 58 68 74 85 92 103 113 117 128 138 144 160 171 187 198">Muchas gracias maman</text>
<text y="687.62" x="0 11 17 23 39 50 57 67 71 77 88 94 105 116 123 134 138 149 159 165 171 183 193 204 220 231 241 247 253 266 270 280 291 297 303 316 320 326 339 346 357 366">et merci à Loreley, Thomas, Kiko, El Bravo</text>
<text y="712.38" x="0 12 22 28 38 49 53 63 69 80 90 101 105 111 121 132 142 152 156 166 172">Tu sais quoi cousin ?</text>
<text y="737.14" x="0 16 27 38 48 59 66 72 83 94 100 106 117 127 138 148 154 158 168 178 184 195 201 212 218 224 235 245 251 261 271 275 284 295 305 311 317 321 332 342 348 355 366">Gagner de façon juste et en suivant les règ</text>
<text y="761.9" x="0 13 17 26 37 43 47 58 68 74 85 89 96 107 113 124 134 140">Vive les pirates !</text>
</g></svg>
<svg x="411" y="151.43" width="359" height="790.48"><g transform="translate(2.700,0)">
<text y="19.05" x="0 13 24 30 36 40 44 54 65 75 79 90 96 107 113 124 135 145 151 157 170 181 191 197 201 212 223 234">Ne t'inquiète pas, Santiago,</text>
<text y="43.81" x="0 10 21 31 41 47 53 64 74 80 86 93 97 107 117 128 135 146 152 163 174 184 190">nous, on trichera pas !</text>
<text y="68.57" x="0 17 28 32 42 48 59 69 75 86 97 107 113 119 130 140 150 161 168 179 185 196 206 216 227 237 248 255 261 272 283 289 300 311 322 332 343">Mais on peut encore essayer de gagner</text>
<text y="93.33" x="0 13 24 34 40 49 56 67 71 77">Pas vrai ?</text>
<text y="118.1" x="0 16 26 30 36 42 48 58 64 75 85 91 98 109 113 123 134 144 150 162 172 183 199 210 220 226">Oui, tu as raison Thomas !</text>
<text y="142.86" x="0 12 16 26 30 40 50 61 71 81 87 97 108 114 120 131 137 147 158 168 175 185 196 202">Finissons cette course !</text>
<text y="167.62" x="0 14 25 35 45 56 63 69 80 90 96 107 111 118 129 135 146 152 158 168 179 189 199 205 214 225 229 233 244 250">Rocher du pirate, nous voilà !</text>
<text y="192.38" x="0 10 21 27 36 47 51 61 67 78 89 100 110 121 128 134">Je vais gagner !</text>
<text y="217.14" x="0 13 19 25 35 46 52 62 73 79 95 99 110 116 127 137 147 158 164 175 186 196">Et ça ne m'étonne pas,</text>
<text y="241.9" x="0 4 15 21 31 41 45 55 61 65 76 82 98 109 113 117 121 132 142 149 155">je suis le meilleur !</text>
<text y="266.67" x="0 10 20 30 36 47 53 63 73 84 90 101 112 119 129 133 144 151 162 168 174 181 185 195 205 216 223 227 238 244">Juste une dernière tricherie !</text>
<text y="291.43" x="0 17 21 25 31 41 52 63 74 81 92 102 108">Mil sabores !</text>
<text y="316.19" x="0 11 15 26 35 46 56 62 68 79 89 95 106 117 123 134 145 155 161 172 176 189 199 206 210 221 231 242 248 259 269 275 281 291 302 306 317 327 338">L'avant du bateau d'Enrique est salonge</text>
<text y="340.95" x="0 11 22 32 39 45 56 67 77 87 98 105 111 115 126 132 136 140 151 161 172 178 189 193 204 211 218 222 231 242 252 258 264 275 285 291 302 309 320 336 340 351 358 364">pour passer la ligne d'arrivant en premier !</text>
<text y="365.71" x="0 14 18 29 39 45 51 55 66 72 78 85 89 99 109 120 127 131 142 148">C'est la tricherie !</text>
<text y="390.48" x="0 12 19 23 33 43 54 60 71 82 92 98">Triche pas !</text>
<text y="415.24" x="0 16 26 32 43 54 65 75 86 93 104 110 121 128 139 149 160 166 177 183 187 198 204 210 221 228 238 249 255 266 276 282 291 302 312 318 324 330 336 348">On gagnera grâce à la force du vent ! Tr</text>
<text y="464.76" x="0 14 25 35 46 50 61 67 73 86 96 103 107 118 128 139 145 151 157 167 173 184 195 204 211 222 226 236 242 253 264 275 282 293 303 314 321 332 338 349 359">Désolé, Enrique, tu devrais apprendre que</text>
<text y="489.52" x="0 10 21 27 38 49 60 70 81 91 97 103 107 118 134 145 149 159 165">ne gagnent jamais !</text>
<text y="514.29" x="0 14 25 31 41 45 56 66 72 78 89 100 110 116 120 130 140 146 157 163">Ce n'est pas juste !</text>
<text y="539.05" x="0 10 21 27 37 47 51 61 67 71 82 88 99 103 113 123 129 140 147 158 168 179 185 191 198 202 212 222 233 243 250 256 267 277 283 299 310 320 331 342 348">Je suis le plus grand tricheur du monde !</text>
<text y="563.81" x="0 10 14 25 35 42 53 57 67 73 84 94 100 111 122 133 143 154 161 167">J'aurais pu gagner !</text>
<text y="588.57" x="0 17 23 29 43 54 64 75 85 95">M. Recess,</text>
<text y="613.33" x="0 11 15 26 37 46 53 69 80 84 90">aidez-moi !</text>
<text y="638.1" x="0 12 23 27 31 41 45 51 62 68 72 83 93 103 109 120 126 139 150 160 166 170 181 192 203 209 220 226 232 243 249 253 257 268 279 289 293 304 315 326 337 343 354 358 371">Félicitations à Santiago et à l'équipage d'El</text>
<text y="662.86" x="0 17 28 35 45 49 55 66 72 82 93 99 115 126 142 153 163 169 175">Merci à ce moment !</text>
<text y="687.62" x="0 13 19 25 41 52 59 69 73 79 90 96 107 118 125 136 140 151 155 161 167 179 189 200 216 227 237 243 249 262 266 276 287 293 299 312 316 322 335 342 353 362">Et merci à Lorelai, Thomas, Kiko, El Bravo</text>
<text y="712.38" x="0 12 22 28 38 49 53 63 69 80 90 101 105 111 117 127 138 148 158 162 172 178">Tu sais quoi, cousin ?</text>
<text y="737.14" x="0 16 27 38 48 59 68 74 85 96 102 108 119 129 140 150 156 160 170 180 186 197 203 214 220 226 237 247 253 263 273 277 286 297 307 313 319 325 329 340 350 356 363">Gagnez de façon juste et en suivant, les rè</text>
<text y="761.9" x="0 13 17 26 37 43 47 58 68 74 85 89 96 107 113 124 134 140">Vive les pirates !</text>
</g></svg>
<svg x="771" y="151.43" width="359" height="790.48"><g transform="translate(2.700,0)">
<text y="19.05" x="0 13 24 30 36 40 44 54 65 75 79 90 96 107 113 124 135 145 151 164 175 185 191 195 206 217 228">Ne t'inquiète pas Santiago,</text>
<text y="43.81" x="0 10 21 31 41 47 58 68 74 84 95 101 107 114 118 128 138 149 156 167 173 184 195 205 211">nous on ne trichera pas !</text>
<text y="68.57" x="0 17 28 32 42 48 59 69 75 86 97 107 113 119 130 140 150 161 168 179 185 196 206 216 227 237 248 255 261 272 283 289 300 311 322 332 343 350">Mais on peut encore essayer de gagner,</text>
<text y="93.33" x="0 11 22 32 38 47 54 65 69 75">pas vrai ?</text>
<text y="118.1" x="0 16 26 30 36 42 52 58 69 79 85 92 103 107 117 128 138 144 156 166 177 193 204 214 220">Oui tu as raison Thomas !</text>
<text y="142.86" x="0 12 16 26 30 40 50 61 71 81 87 97 108 114 120 131 137 147 158 168 175 185 196 202">Finissons cette course !</text>
<text y="167.62" x="0 14 25 35 45 56 63 69 80 90 96 107 111 118 129 135 146 152 158 168 179 189 199 205 214 225 229 233 244 250">Rocher du pirate, nous voilà !</text>
<text y="192.38" x="0 10 21 27 36 47 51 61 67 78 89 100 110 121 128 134">Je vais gagner !</text>
<text y="217.14" x="0 13 19 25 35 46 52 62 73 79 95 99 110 116 127 137 147 158 164 175 186 196">Et ça ne m'étonne pas,</text>
<text y="241.9" x="0 4 15 21 31 41 45 55 61 65 76 82 98 109 113 117 121 132 142 149 155">je suis le meilleur !</text>
<text y="266.67" x="0 10 20 30 36 47 53 63 73 84 90 101 112 119 129 133 144 151 162 168 174 181 185 195 205 216 223 227 238 244">Juste une dernière tricherie !</text>
<text y="291.43" x="0 17 21 25 36 46 52 65 76 87 98 105 111">Miles Sabor !</text>
<text y="316.19" x="0 11 15 26 35 46 56 62 68 79 89 95 106 117 123 134 145 155 161 172 176 189 200 210 217 221 232 242 253 259 269 273 284 288 292 303 313 324">L'avant du bateau d'Henrique s'allonge</text>
<text y="340.95" x="0 11 22 32 39 45 56 67 77 87 98 105 111 115 126 132 136 140 151 161 172 178 189 193 204 211 218 222 231 242 253 259 270 280 286 297 304 315 331 335 346 353 359">pour passer la ligne d'arrivée en premier !</text>
<text y="365.71" x="0 14 18 29 39 45 51 55 66 72 78 85 89 99 109 120 126">C'est la triche !</text>
<text y="390.48" x="0 13 24 34 44 50 61 71 77 87 98 104 110 117 121 131 141 152 158 169 180 190 196">Nous on ne triche pas !</text>
<text y="415.24" x="0 16 26 32 43 54 65 75 86 93 104 110 121 128 139 149 160 166 177 183 187 198 204 210 221 228 238 249 255 266 276 282 291 302 312 318 324">On gagnera grâce à la force du vent !</text>
<text y="464.76" x="0 14 25 35 46 50 61 67 80 91 101 108 112 123 133 144 150 156 162 172 178 189 200 209 216 227 231 241 247 258 269 280 287 298 308 319 326 337 343 354 364">Désolé Henrique, tu devrais apprendre que</text>
<text y="489.52" x="0 11 21 27 37 48 54 65 76 87 97 108 114 118 129 145 156 160 170 176">on ne gagne jamais !</text>
<text y="514.29" x="0 14 25 31 41 45 56 66 72 78 89 100 110 116 120 130 140 146 157 163">Ce n'est pas juste !</text>
<text y="539.05" x="0 10 21 27 37 47 51 61 67 71 82 88 99 103 113 123 129 140 147 158 168 179 185 191 198 202 212 222 233 243 250 256 267 277 283 299 310 320 331 342 348">Je suis le plus grand tricheur du monde !</text>
<text y="563.81" x="0 10 14 25 35 42 53 57 67 73 84 94 100 111 122 133 143 154 161 167">J'aurais dû gagner !</text>
<text y="588.57" x="0 17 28 38 44 54 65 75 82 86 96 107 113 119 130 140 146">Mes souricettes !</text>
<text y="613.33" x="0 13 17 28 39 48 55 71 82 86 92">Aidez-moi !</text>
<text y="638.1" x="0 12 23 27 31 41 45 51 62 68 72 83 93 103 109 120 126 139 150 160 166 170 181 192 203 209 220 226 232 243 249 253 257 268 279 289 293 304 315 326 337 343 354 358 371">Félicitations à Santiago et à l'équipage d'El</text>
<text y="662.86" x="0 17 28 35 45 49 55 66 77 88 98 108 119 129 140 146 162 173 189 200 210 216">Merci beaucoup maman !</text>
<text y="687.62" x="0 13 19 25 41 52 59 69 73 79 90 96 107 118 125 136 140 151 155 161 167 179 189 200 216 227 237 243 249 262 266 276 287 293 299 312 316 322 335 342 353 362">Et merci à Lorelai, Thomas, Kiko, El Bravo</text>
<text y="712.38" x="0 12 22 28 38 49 53 63 69 80 90 101 105 111 121 132 142 152 156 166 172">Tu sais quoi cousin ?</text>
<text y="737.14" x="0 16 27 38 48 59 66 72 83 94 100 106 117 127 138 148 154 158 168 178 184 195 201 212 218 224 235 245 251 261 271 275 284 295 305 311 317 321 332 342 348 355 366">Gagner de façon juste et en suivant les règ</text>
<text y="761.9" x="0 13 17 26 37 43 47 58 68 74 85 89 96 107 113 124 134 140">Vive les pirates !</text>
</g></svg>
<svg x="1131" y="151.43" width="359" height="790.48"><g transform="translate(2.700,0)">
<text y="19.05" x="0 13 24 30 36 40 44 54 65 75 79 90 96 107 113 124 135 145 151 157 170 181 185 195 201 208 222 233 244 255">Ne t'inquiète pas, Saint-Yago,</text>
<text y="43.81" x="0 10 21 31 41 47 53 64 74 80 90 101 107 113 120 124 134 144 155 162 173 179 190 201 211 217">nous, on ne trichera pas !</text>
<text y="68.57" x="0 17 28 32 42 48 59 69 75 86 97 107 113 119 130 140 150 161 168 179 185 196 206 216 227 237 248 255 261 272 283 289 300 311 322 332 343 350">Mais on peut encore essayer de gagner,</text>
<text y="93.33" x="0 11 22 32 38 47 54 65 69 75">pas vrai ?</text>
<text y="118.1" x="0 16 26 30 36 42 48 58 64 75 85 91 98 109 113 123 134 144 150 162 172 183 199 210 220 226">Oui, tu as raison Thomas !</text>
<text y="142.86" x="0 12 16 26 30 40 50 61 71 81 87 97 108 114 120 131 137 147 158 168 175 185 196 202">Finissons cette course !</text>
<text y="167.62" x="0 14 25 35 45 56 63 69 80 90 96 107 111 118 129 135 146 152 158 168 179 189 199 205 214 225 229 233 244 250">Rocher du pirate, nous voilà !</text>
<text y="192.38" x="0 10 21 27 36 47 51 61 67 78 89 100 110 121 128 134">Je vais gagner !</text>
<text y="217.14" x="0 13 19 25 35 46 52 62 73 79 95 106 112 118 129 139 149 160 166 177 188 198">Et ça ne mettonne pas,</text>
<text y="241.9" x="0 4 15 21 31 41 45 55 61 65 76 82 98 109 113 117 121 132 142 149 155">je suis le meilleur !</text>
<text y="266.67" x="0 10 20 30 36 47 53 63 73 84 90 101 112 119 129 133 144 151 162 168 174 181 185 195 205 216 223 227 238 244">Juste une dernière tricherie !</text>
<text y="291.43" x="0 17 21 25 31 37 47 51 62 73 84 91 102 108">Mil, s'abord !</text>
<text y="316.19" x="0 11 15 26 35 46 56 62 68 79 89 95 106 117 123 134 145 155 161 172 176 189 199 210 217 227 233 239 250 260 264 270 281 291 297 303 313 324 328 339 349">L'avant du bateau d'Enery, qui est salon,</text>
<text y="340.95" x="0 4 15 21 32 43 53 60 71 82 92 102 113 119 123 134 140 144 148 159 169 180 186 197 201 212 219 226 230 239 250 260 266 272 278 289 296 307 323 327 338 345 351">je pourpasse la ligne d'arrivant, premier !</text>
<text y="365.71" x="0 14 18 29 39 45 51 55 59 70 76 83 94 100">C'est l'âtre !</text>
<text y="390.48" x="0 13 24 34 40 46 52 59 63 73 83 94 104 110 121 132 142 148">Non, triches pas !</text>
<text y="415.24" x="0 16 26 32 43 54 65 75 86 93 104 110 121 128 139 149 160 166 177 183 187 198 204 210 221 228 238 249 255 266 276 282 291 302 312 318 324">On gagnera grâce à la force du vent !</text>
<text y="440" x="0 6 16 26 32 43 54 60 66 72 83 93 99 109 120 130 139 150 154 160 176 186 192 198 204 210 221 225 231 241 252 262 268 279 285 291 297 309 316 327 337 348 359 368">Iùs pet, au nouvel Ouf ! L' haste ! Frangez-</text>
<text y="464.76" x="0 14 25 35 46 50 61 67 73 86 102 109 113 119 130 134 141 152 158 164 170 180 186 197 208 217 224 235 239 249 255 266 277 288 295 306 316 327 334 345 351 362">Désolé, Amritaire, tu devrais apprendre qu</text>
<text y="489.52" x="0 11 21 27 37 48 54 65 76 87 97 108 114 118 129 145 156 160 170">on ne gagne jamais.</text>
<text y="514.29" x="0 10 21 27 37 41 52 56 62 73 84 94 100 104 114 124 130 141">Je n'ai pas juste,</text>
<text y="539.05" x="0 4 15 21 31 41 45 55 61 65 76 82 93 97 107 117 123 134 141 152 162 173 179 185 192 196 206 216 227 237 244 250 261 271 277 293 304 314 325 336">je suis le plus grand tricheur du monde.</text>
<text y="563.81" x="0 10 14 25 35 42 53 57 67 73 84 90 101 107 118 129 140 150 161 167">J'aurais été gagné !</text>
<text y="588.57" x="0 14 18 29 39 45 51 61 72 78 84 88 99 105 111 117 134 145 149 159 165 175 185 192 198 202 213 223 229 240">C'est ça, là ! Mais sur les 7,</text>
<text y="613.33" x="0 11 17 23 34 45 55 61 77 88 92 102 108">et des mois !</text>
<text y="638.1" x="0 12 23 27 31 41 45 51 62 68 72 83 93 103 109 120 126 139 150 160 166 170 181 192 203 209 220 226 232 243 249 253 257 268 279 289 293 304 315 326 337 343 354 358 371">Félicitations à Santiago et à l'équipage d'El</text>
<text y="662.86" x="0 17 28 38 48 58 69 75 86 92 102 113 119 135 146 162 173 183 189">Mouche à ce moment,</text>
<text y="687.62" x="0 16 27 34 44 48 54 65 71 75 79 90 97 108 112 123 127 133 145 155 166 182 193 203 209 215 228 232 242 253 259 265 276 280 284 295 301 312 319 330 339 350">merci à l'orelai Thomas, Kiko, elle bravo,</text>
<text y="712.38" x="0 12 22 28 38 49 53 63 69 80 90 101 105 111 121 132 142 152 156 166 172">Tu sais quoi cousin ?</text>
<text y="737.14" x="0 16 27 38 48 59 65 76 87 93 99 110 120 131 141 147 158 169 179 185 196 207 213 224 234 240 250 260 264 273 284 294 300 306 310 321 331 337 344 355 366">Gagné de façon gestée en suivant les règl</text>
<text y="761.9" x="0 13 17 28 32 36 42 48 61 65 76 80 84 90">Bibli, Bibli !</text>
</g></svg>
<svg x="1491" y="151.43" width="359" height="790.48"><g transform="translate(2.700,0)">
<text y="19.05" x="0 13 24 30 36 40 44 54 65 75 79 90 96 107 113 124 135 145 151 157 170 181 191 197 201 212 223 234 240">Ne t'inquiète pas, Santiago !</text>
<text y="43.81" x="0 13 24 34 44 50 56 67 77 83 93 104 110 116 123 127 137 147 158 165 176 182 193 204 214 220">Nous, on ne trichera pas !</text>
<text y="68.57" x="0 17 28 32 42 48 54 65 75 81 92 103 113 119 125 136 146 156 167 174 185 191 202 212 222 233 243 254 261 267 278 289 295 306 317 328 338 349 356">Mais, on peut encore essayer de gagner,</text>
<text y="93.33" x="0 13 24 34 40 49 56 67 71 77">Pas vrai ?</text>
<text y="118.1" x="0 16 26 30 36 42 48 58 64 75 85 91 98 109 113 123 134 144 150 162 172 183 199 210 220 226">Oui, tu as raison Thomas !</text>
<text y="142.86" x="0 12 16 26 30 40 50 61 71 81 87 97 108 114 120 131 137 147 158 168 175 185 196 202">Finissons cette course !</text>
<text y="167.62" x="0 14 25 35 45 56 63 69 80 90 96 107 111 118 129 135 146 152 158 164 177 188 198 208 214 223 234 238 242 253 259">Rocher du pirate ! Nous voilà !</text>
<text y="192.38" x="0 10 21 27 36 47 51 61 67 78 89 100 110 121 128 134">Je vais gagner !</text>
<text y="217.14" x="0 13 19 25 35 46 52 62 73 79 95 99 110 116 127 137 147 158 164 175 186 196">Et ça ne m'étonne pas,</text>
<text y="241.9" x="0 4 15 21 31 41 45 55 61 65 76 82 98 109 113 117 121 132 142 149 155">je suis le meilleur !</text>
<text y="266.67" x="0 10 20 30 36 47 53 63 73 84 90 101 112 119 129 133 144 151 162 168 174 181 185 195 205 216 223 227 238 244">Juste une dernière tricherie !</text>
<text y="291.43" x="0 17 21 25 29 40 46 56 67 78 89 96 107 113">Mille sabore !</text>
<text y="316.19" x="0 11 15 26 35 46 56 62 68 79 89 95 106 117 123 134 145 155 161 172 176 189 199 210 217 227 233 244 254 258 264 275 285 291 297 307 318 322 333 343">L'avant du bateau d'Enery qui est salon,</text>
<text y="340.95" x="0 4 15 21 32 43 53 60 67 78 82 92 98 109 120 130 140 151 158 164 168 179 185 189 193 204 214 225 231 242 246 257 264 271 275 284 295 305 311 317 323 334 341 352 368">je pourrais passer la ligne d'arrivant, premi</text>
<text y="365.71" x="0 14 18 29 39 45 51 55 59 70 76 83 94 100">C'est l'âtre !</text>
<text y="390.48" x="0 13 24 34 40 46 52 59 63 73 83 94 104 110 121 132 142 148">Non, triches pas !</text>
<text y="415.24" x="0 16 26 32 43 54 65 75 86 93 104 110 121 128 139 149 160 166 177 183 187 198 204 210 221 228 238 249 255 266 276 282 291 302 312 318 324">On gagnera grâce à la force du vent !</text>
<text y="440" x="0 14 20 31 42 52 58 64 68 78 88 94 105 111 122 132 143 149 153 157 168 178 184 193 197 208 212 223 234 240 244 255 261 272 283 293 303 307 318 328 334 340 353 359 365">И peut juste que l'on violée le pension. Et v</text>
<text y="464.76" x="0 11 22 32 43 47 58 64 75 81 97 108 114 121 125 136 146 157 164 170 176 182 192 198 209 220 229 236 247 251 261 267 278 289 300 307 318 328 339 346 357 363">désolé à me riquer, tu devrais apprendre q</text>
<text y="489.52" x="0 11 21 27 37 48 54 65 76 87 97 108 114 118 129 145 156 160 170">on ne gagne jamais.</text>
<text y="514.29" x="0 10 21 27 37 41 52 56 62 73 84 94 100 104 114 124 130 141">Je n'ai pas juste,</text>
<text y="539.05" x="0 4 15 21 31 41 45 55 61 65 76 82 93 97 107 117 123 134 141 152 162 173 179 185 192 196 206 216 227 237 244 250 261 271 277 293 304 314 325 336">je suis le plus grand tricheur du monde.</text>
<text y="563.81" x="0 10 14 25 35 42 53 57 67 73 84 90 101 107 118 129 140 150 161">J'aurais été gagné.</text>
<text y="588.57" x="0 14 18 29 39 45 51 61 72 78 84 101 112 122 132 136 147 157 164 170 184 195 205 215 226 232 238 249">C'est ça. Monsieur Ressette,</text>
<text y="613.33" x="0 11 17 23 34 45 55 61 77 88 92 102 108">et des mois !</text>
<text y="638.1" x="0 12 23 27 31 41 45 51 62 68 72 83 93 103 109 120 126 139 150 160 166 170 181 192 203 209 220 226 232 243 249 253 257 268 279 289 293 304 315 326 337 343 354 358 371">Félicitations à Santiago et à l'équipage d'El</text>
<text y="662.86" x="0 17 28 35 45 49 55 66 72 82 93 99 115 126 142 153 163 169">Merci à ce moment,</text>
<text y="687.62" x="0 11 17 23 39 50 57 67 71 77 88 94 98 102 118 125 136 140 151 155 161 173 183 194 210 221 231 237 243 254 264 268 274 284 295 305 311 317 323 334 338 342 353 359 370">et merci à l'Orelai Thomas, qui coût, elle br</text>
<text y="712.38" x="0 12 22 28 38 49 53 63 69 80 90 101 105 111 121 132 142 152 156 166 172">Tu sais quoi cousin ?</text>
<text y="737.14" x="0 16 27 38 48 59 65 76 87 93 99 110 120 131 141 147 158 169 179 185 196 207 213 219 230 240 246 256 266 270 279 290 300 306 312 316 327 337 343 350 361">Gagné de façon gestée, en suivant les règ</text>
<text y="761.9" x="0 13 17 28 32 43 54 58 62 73 83 90 96">Biblébileur !</text>
</g></svg>
<g>
<text y="170.48" x="1863.400">*</text>
<text y="195.24" x="1863.400">*</text>
<text y="220" x="1863.400">*</text>
<text y="244.76" x="1863.400">*</text>
<text y="269.52" x="1863.400">*</text>
<text y="294.29" x="1863.400">*</text>
<text y="319.05" x="1863.400">*</text>
<text y="343.81" x="1863.400">*</text>
<text y="368.57" x="1863.400">*</text>
<text y="393.33" x="1863.400">*</text>
<text y="418.1" x="1863.400">*</text>
<text y="442.86" x="1863.400">*</text>
<text y="467.62" x="1863.400">*</text>
<text y="492.38" x="1863.400">*</text>
<text y="517.14" x="1863.400">*</text>
<text y="541.9" x="1863.400">*</text>
<text y="566.67" x="1863.400">*</text>
<text y="591.43" x="1863.400">*</text>
<text y="616.19" x="1863.400">*</text>
<text y="640.95" x="1863.400">*</text>
<text y="665.71" x="1863.400">*</text>
<text y="690.48" x="1863.400">*</text>
<text y="715.24" x="1863.400">*</text>
<text y="740" x="1863.400">*</text>
<text y="764.76" x="1863.400">*</text>
<text y="789.52" x="1863.400">*</text>
<text y="814.29" x="1863.400">*</text>
<text y="839.05" x="1863.400">*</text>
<text y="863.81" x="1863.400">*</text>
<text y="888.57" x="1863.400">*</text>
<text y="913.33" x="1863.400">*</text>
</g>
<svg x="11" y="151.43" width="39" height="790.48">
<text y="19.05" x="9 20">54</text>
<text y="43.81" x="9 20">55</text>
<text y="68.57" x="9 20">56</text>
<text y="93.33" x="9 20">57</text>
<text y="118.1" x="9 20">58</text>
<text y="142.86" x="9 20">59</text>
<text y="167.62" x="9 20">60</text>
<text y="192.38" x="9 20">61</text>
<text y="217.14" x="9 20">62</text>
<text y="241.9" x="9 20">63</text>
<text y="266.67" x="9 20">64</text>
<text y="291.43" x="9 20">65</text>
<text y="316.19" x="9 20">66</text>
<text y="340.95" x="9 20">67</text>
<text y="365.71" x="9 20">68</text>
<text y="390.48" x="9 20">69</text>
<text y="415.24" x="9 20">70</text>
<text y="440" x="9 20">71</text>
<text y="464.76" x="9 20">72</text>
<text y="489.52" x="9 20">73</text>
<text y="514.29" x="9 20">74</text>
<text y="539.05" x="9 20">75</text>
<text y="563.81" x="9 20">76</text>
<text y="588.57" x="9 20">77</text>
<text y="613.33" x="9 20">78</text>
<text y="638.1" x="9 20">79</text>
<text y="662.86" x="9 20">80</text>
<text y="687.62" x="9 20">81</text>
<text y="712.38" x="9 20">82</text>
<text y="737.14" x="9 20">83</text>
<text y="761.9" x="9 20">84</text>
<text y="786.67" x="9 20">85</text>
</svg>
<text y="145.71" x="223.5">A</text>
<text y="145.71" x="583.5">B</text>
<text y="145.71" x="943.0">C</text>
<text y="145.71" x="1303.0">D</text>
<text y="145.71" x="1663.5">E</text>
<text y="145.71" x="1861.0">F</text>
<text y="119.05" x="81.400 93.400 104.400">F84</text>
<text y="118.1" x="301">*</text>
</g></svg>
<div style="left:1849px;top:937px;width:37px;height:29px;border:3px solid #000"></div>
<div style="left:1881px;top:961px;width:7px;height:7px;background:#fff"></div>
<div style="left:1882px;top:962px;width:5px;height:5px;background:#000"></div>
<div style="left:1889px;top:133px;width:1px;height:856px;background:#b0b0b0"></div>
<div style="left:1890px;top:133px;width:20px;height:856px;background:#fff;border-right:1px solid #e4e4e4"></div>
<div style="left:1890px;top:133px;width:20px;height:8px;background:#f0f0f0;border-left:1px solid #fff;border-top:1px solid #fff;border-right:1px solid #a0a0a0"></div>
<div style="left:1889px;top:141px;width:20px;height:1.300px;background:#000"></div>
<div style="left:1890px;top:162px;width:19px;height:1px;background:#c8c8c8"></div>
<svg style="left:1893px;top:149px" width="12" height="8" viewBox="0 0 12 8"><path d="M1 7l5-5.500l5 5.500" fill="none" stroke="#5c5c5c" stroke-width="1.300"/></svg>
<div style="left:1889px;top:672px;width:21px;height:297px;background:#dcdcdc;border:1px solid #a8a8a8;border-right-color:#d0d0d0"></div>
<div style="left:1895px;top:815px;width:9px;height:1px;background:#5a5a5a"></div>
<div style="left:1895px;top:819px;width:9px;height:1px;background:#5a5a5a"></div>
<div style="left:1895px;top:823px;width:9px;height:1px;background:#5a5a5a"></div>
<svg style="left:1893px;top:975px" width="12" height="8" viewBox="0 0 12 8"><path d="M1 1l5 5.500l5-5.500" fill="none" stroke="#5c5c5c" stroke-width="1.300"/></svg>
<div style="left:11px;top:989px;width:1900px;height:21px;background:#f0f0f0"></div>
<div style="left:11px;top:989px;width:1879px;height:1px;background:#a0a0a0"></div>
<div style="left:9px;top:1010px;width:1902px;height:1px;background:#fafafa"></div>
<svg style="left:11px;top:990px" width="80" height="20" viewBox="0 0 80 20"><g fill="#000"><rect x="5" y="5" width="1.600" height="10"/><path d="M13 5v10l-6-5z"/><path d="M32 5v10l-6-5z"/><path d="M47 5v10l6-5z"/><path d="M66.500 5v10l6-5z"/><rect x="73" y="5" width="1.600" height="10"/></g></svg>
<svg style="left:88px;top:989px" width="210" height="21" viewBox="88 989 210 21"><path d="M286.700 989.500l-9.400 19h-57.800l-9.400-19z" fill="#f0f0f0"/><path d="M286.700 989.500l-9.400 19h-57.800l-2-4" fill="none" stroke="#5a5a5a" stroke-width="1"/><path d="M225 989.500l-9.400 19h-57.600l-9.400-19z" fill="#f0f0f0"/><path d="M225 989.500l-9.400 19h-57.600l-2-4" fill="none" stroke="#5a5a5a" stroke-width="1"/><path d="M90.600 989l9.400 19.500h54l9-19.500z" fill="#fff"/><path d="M90.600 989.500l9.400 19h54l9-19" fill="none" stroke="#2a2a2a" stroke-width="1"/></svg>
<div class="t" id="tab1" style="left:102.50px;top:989px;font-family:'Liberation Sans',sans-serif;font-size:16px;line-height:20px;font-weight:bold;letter-spacing:-.25px">Лист1</div>
<div class="t" id="tab2" style="left:167.50px;top:989px;font-family:'Liberation Sans',sans-serif;font-size:16px;line-height:20px;letter-spacing:-.45px">Лист2</div>
<div class="t" id="tab3" style="left:229.20px;top:989px;font-family:'Liberation Sans',sans-serif;font-size:16px;line-height:20px;letter-spacing:-.45px">Лист3</div>
<div style="left:1139px;top:990px;width:7px;height:19px;background:#f0f0f0;border-left:1px solid #fff;border-top:1px solid #fff;border-bottom:1px solid #a0a0a0;border-right:1px solid #a0a0a0"></div>
<div style="left:1146px;top:989px;width:1.500px;height:20px;background:#000"></div>
<div style="left:1148px;top:990px;width:742px;height:19px;background:#fff;border-top:1px solid #e0e0e0;border-bottom:1px solid #e0e0e0"></div>
<div style="left:1167px;top:989px;width:520px;height:21px;background:#dcdcdc;border:1px solid #a8a8a8;border-bottom-color:#c8c8c8"></div>
<div style="left:1423px;top:995px;width:1px;height:9px;background:#5a5a5a"></div>
<div style="left:1427px;top:995px;width:1px;height:9px;background:#5a5a5a"></div>
<div style="left:1431px;top:995px;width:1px;height:9px;background:#5a5a5a"></div>
<svg style="left:1153px;top:994px" width="8" height="12" viewBox="0 0 8 12"><path d="M7 1l-5.500 5l5.500 5" fill="none" stroke="#5c5c5c" stroke-width="1.300"/></svg>
<svg style="left:1867px;top:994px" width="8" height="12" viewBox="0 0 8 12"><path d="M1 1l5.500 5l-5.500 5" fill="none" stroke="#5c5c5c" stroke-width="1.300"/></svg>
<div style="left:1860px;top:990px;width:1px;height:19px;background:#e0e0e0"></div>
<div style="left:1881px;top:990px;width:8px;height:19px;background:#f0f0f0;border-left:1px solid #fff;border-top:1px solid #fff;border-bottom:1px solid #a0a0a0;border-right:1px solid #a0a0a0"></div>
<div style="left:1888px;top:989px;width:1.500px;height:20px;background:#000"></div>
<div style="left:1890px;top:989px;width:21px;height:21px;background:#f0f0f0"></div>
<div style="left:1905px;top:997px;width:2px;height:2px;background:#b8b8b8"></div>
<div style="left:1901px;top:1001px;width:2px;height:2px;background:#b8b8b8"></div>
<div style="left:1905px;top:1001px;width:2px;height:2px;background:#b8b8b8"></div>
<div style="left:1897px;top:1005px;width:2px;height:2px;background:#b8b8b8"></div>
<div style="left:1901px;top:1005px;width:2px;height:2px;background:#b8b8b8"></div>
<div style="left:1905px;top:1005px;width:2px;height:2px;background:#b8b8b8"></div>
<div class="t" id="st1" style="left:15.40px;top:1015px;letter-spacing:0.240px;font-size:13px;line-height:22px">Готово</div>
<div class="t" id="st2" style="left:1749.20px;top:1015px;letter-spacing:-0.600px;font-size:12px;line-height:22px">NUM</div>
<div style="left:1510px;top:1014px;width:34px;height:19px;border:1px solid #f7f7f7"></div>
<div style="left:1546px;top:1014px;width:130px;height:19px;border:1px solid #f7f7f7"></div>
<div style="left:1678px;top:1014px;width:30px;height:19px;border:1px solid #f7f7f7"></div>
<div style="left:1710px;top:1014px;width:35px;height:19px;border:1px solid #f7f7f7"></div>
<div style="left:1747px;top:1014px;width:30px;height:19px;border:1px solid #f7f7f7"></div>
<div style="left:1779px;top:1014px;width:33px;height:19px;border:1px solid #f7f7f7"></div>
<div style="left:1814px;top:1014px;width:29px;height:19px;border:1px solid #f7f7f7"></div>
<div style="left:1846px;top:1014px;width:36px;height:19px;border:1px solid #f7f7f7"></div>
<div style="left:1906px;top:1022px;width:2px;height:2px;background:#b8b8b8"></div>
<div style="left:1902px;top:1026px;width:2px;height:2px;background:#b8b8b8"></div>
<div style="left:1906px;top:1026px;width:2px;height:2px;background:#b8b8b8"></div>
<div style="left:1898px;top:1030px;width:2px;height:2px;background:#b8b8b8"></div>
<div style="left:1902px;top:1030px;width:2px;height:2px;background:#b8b8b8"></div>
<div style="left:1906px;top:1030px;width:2px;height:2px;background:#b8b8b8"></div>
<svg style="left:1376px;top:8px" width="16" height="24" viewBox="-1 -1 16 24"><path d="M.500 .800v16.400l3.900-3.700l3 7.200l2.600-1.100l-3-7h5.300z" fill="#fff" stroke="#000" stroke-width="1" stroke-linejoin="miter"/></svg>
</body></html>
